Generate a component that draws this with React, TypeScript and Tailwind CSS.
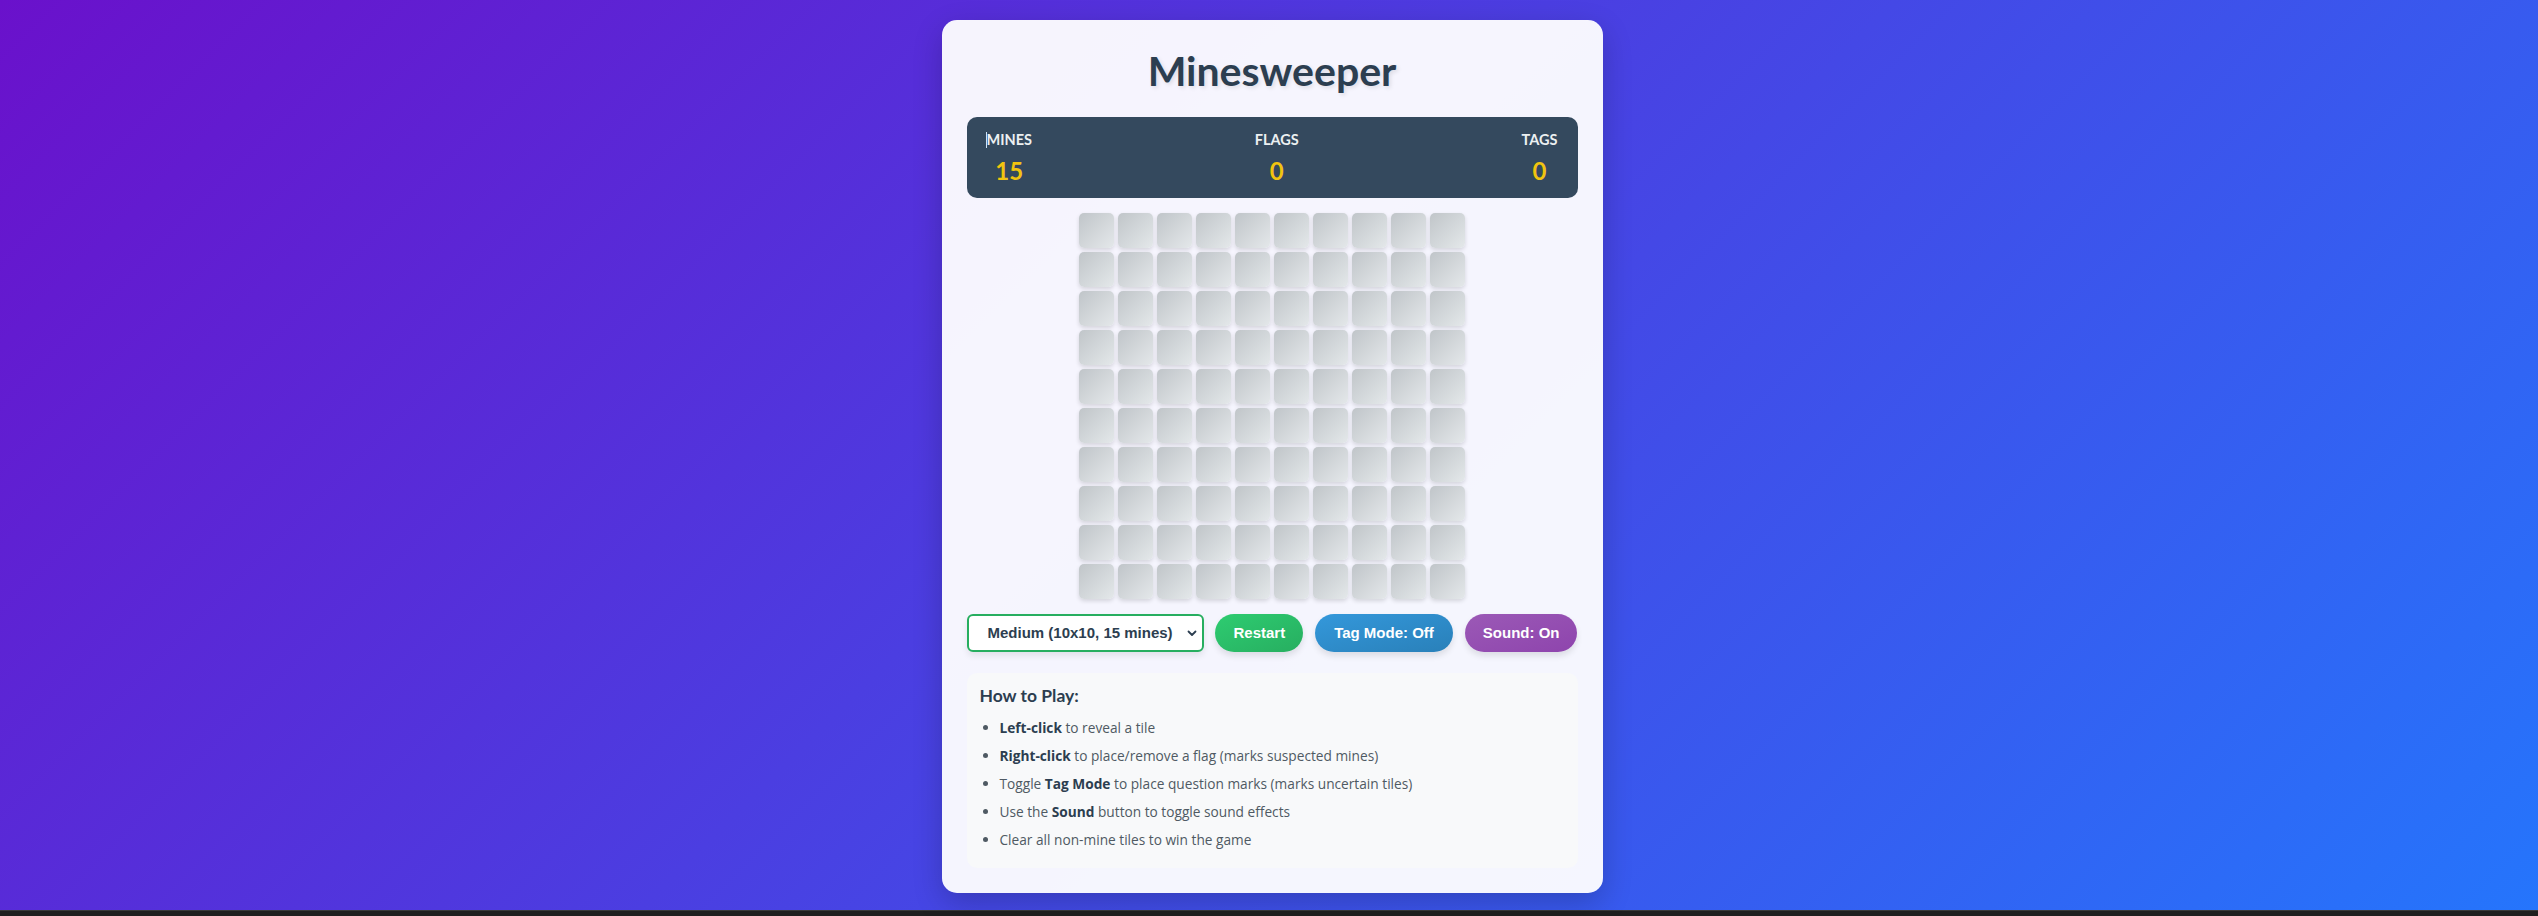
import React from "react";

const ROWS = 10;
const COLS = 10;

function Stat({ label, value, caret = false }: { label: string; value: number; caret?: boolean }) {
  return (
    <div className="flex flex-col items-center">
      <div className="relative text-[14.5px] leading-[20px] font-bold text-[#ecf0f1]">
        {caret && <span className="absolute left-[-1px] top-[2px] h-[16px] w-px bg-[#cfe3f7]" />}
        {label}
      </div>
      <div className="mt-[6px] text-[24px] leading-[30px] font-bold text-[#f1c40f]">{value}</div>
    </div>
  );
}

function Tile() {
  return (
    <div className="h-[35px] w-[35px] rounded-[5px] bg-gradient-to-br from-[#c0c5c9] to-[#e4e8ea] shadow-[0_2px_4px_rgba(0,0,0,0.14)]" />
  );
}

export default function App() {
  const tiles = Array.from({ length: ROWS * COLS });
  return (
    <div className="font-['Lato','Open_Sans',sans-serif]">
      <div className="flex h-[910px] w-full justify-center bg-[linear-gradient(135deg,#6a11cb_0%,#2575fc_100%)] pt-[20px] pl-[6px]">
        <div className="h-fit w-[661px] rounded-[15px] bg-white/95 p-[25px] shadow-[0_10px_30px_rgba(0,0,0,0.2)]">
          <h1 className="mb-[20px] text-center text-[41px] leading-[52px] font-bold text-[#2c3e50] [text-shadow:2px_2px_4px_rgba(0,0,0,0.1)]">
            Minesweeper
          </h1>

          <div className="flex h-[81px] justify-between rounded-[10px] bg-[#34495e] px-[20px] pt-[13px]">
            <Stat label="MINES" value={15} caret />
            <Stat label="FLAGS" value={0} />
            <Stat label="TAGS" value={0} />
          </div>

          <div className="mx-auto mt-[15px] grid w-fit grid-cols-10 gap-[4px]">
            {tiles.map((_, i) => (
              <Tile key={i} />
            ))}
          </div>

          <div className="mt-[15px] flex items-center justify-between font-['Liberation_Sans',Arial,sans-serif] text-[15px] font-bold">
            <div className="flex h-[38px] w-[237px] items-center justify-between rounded-[6px] border-2 border-[#27ae60] bg-white pl-[19px] pr-[5px] text-[#2c3e50] shadow-[0_4px_6px_rgba(0,0,0,0.08)]">
              <span>Medium (10x10, 15 mines)</span>
              <svg width="10" height="7" viewBox="0 0 10 7" fill="none">
                <path d="M1.5 1.5 L5 5 L8.5 1.5" stroke="#2c3e50" strokeWidth="1.8" strokeLinecap="round" strokeLinejoin="round" />
              </svg>
            </div>
            <button className="h-[38px] rounded-full bg-gradient-to-br from-[#2ecc71] to-[#27ae60] px-[18px] text-white shadow-[0_4px_6px_rgba(0,0,0,0.1)]">
              Restart
            </button>
            <button className="h-[38px] rounded-full bg-gradient-to-br from-[#3498db] to-[#2980b9] px-[19px] text-white shadow-[0_4px_6px_rgba(0,0,0,0.1)]">
              Tag Mode: Off
            </button>
            <button className="h-[38px] rounded-full bg-gradient-to-br from-[#9b59b6] to-[#8e44ad] px-[18px] text-white shadow-[0_4px_6px_rgba(0,0,0,0.1)]">
              Sound: On
            </button>
          </div>

          <div className="mt-[21px] rounded-[10px] bg-[#f8f9fa] px-[13px] pt-[13px] pb-[10px]">
            <h3 className="mb-[12px] text-[17.5px] leading-[20px] font-bold text-[#2c3e50]">How to Play:</h3>
            <ul className="list-disc pl-[20px] font-['Open_Sans','Lato',sans-serif] text-[13.7px] leading-[20px] text-[#4f5a63]">
              <li className="mb-[8px]">
                <strong className="text-[#2c3e50]">Left-click</strong> to reveal a tile
              </li>
              <li className="mb-[8px]">
                <strong className="text-[#2c3e50]">Right-click</strong> to place/remove a flag (marks suspected mines)
              </li>
              <li className="mb-[8px]">
                Toggle <strong className="text-[#2c3e50]">Tag Mode</strong> to place question marks (marks uncertain tiles)
              </li>
              <li className="mb-[8px]">
                Use the <strong className="text-[#2c3e50]">Sound</strong> button to toggle sound effects
              </li>
              <li className="mb-[8px]">Clear all non-mine tiles to win the game</li>
            </ul>
          </div>
        </div>
      </div>
      <div className="h-[6px] w-full border-t border-[#3a3a3a] bg-[#1f1f1f]" />
    </div>
  );
}
